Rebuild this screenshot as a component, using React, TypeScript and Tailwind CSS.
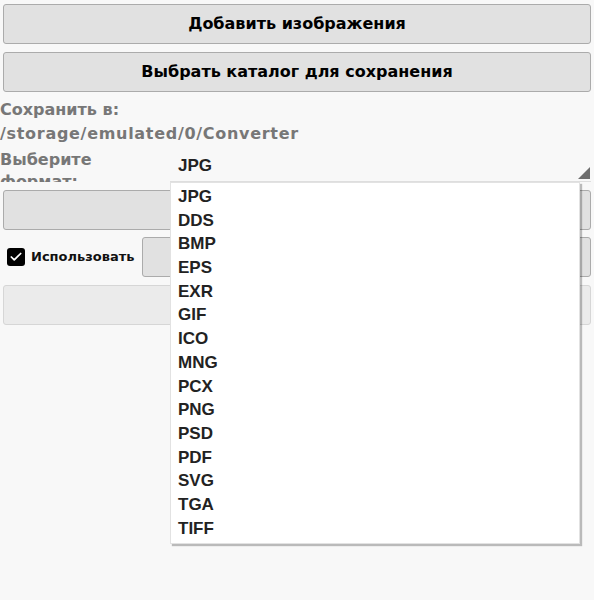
import { Check } from 'lucide-react';

const FORMATS = ['JPG', 'DDS', 'BMP', 'EPS', 'EXR', 'GIF', 'ICO', 'MNG', 'PCX', 'PNG', 'PSD', 'PDF', 'SVG', 'TGA', 'TIFF'];

function Button({ children, disabled, className = '' }: { children?: React.ReactNode; disabled?: boolean; className?: string }) {
  return (
    <button
      className={`h-[40px] rounded-[3px] border text-[16px] font-bold text-black ${
        disabled ? 'border-[#d6d6d6] bg-[#ebebeb]' : 'border-[#ababab] bg-[#e1e1e1]'
      } ${className}`}
    >
      {children}
    </button>
  );
}

export default function App() {
  return (
    <div className="relative h-[600px] w-full overflow-hidden bg-[#f8f8f8] px-[3px] pt-[4px] font-['DejaVu_Sans',Verdana,sans-serif]">
      <div className="flex flex-col">
        <Button className="w-full">Добавить изображения</Button>
        <Button className="mt-[8px] w-full">Выбрать каталог для сохранения</Button>

        <div className="-ml-[3px] mt-[6px] text-[16px] font-bold leading-[24px] text-[#777]">
          <div>Сохранить в:</div>
          <div className="tracking-[0.7px]">/storage/emulated/0/Converter</div>
        </div>

        <div className="-ml-[3px] mt-[3px] flex h-[33px] overflow-hidden">
          <div className="w-[170px] shrink-0 text-[16px] font-bold leading-[22px] text-[#777]">
            <div className="w-[110px]">Выберите формат:</div>
          </div>
          <div className="relative flex-1 border-b border-[#dedede]">
            <div className="pl-[8px] pt-[5px] font-['Liberation_Sans',Arial,sans-serif] text-[17px] font-bold leading-[24px] text-[#222]">JPG</div>
            <svg className="absolute bottom-[2px] right-[1px]" width="12" height="12" viewBox="0 0 12 12">
              <polygon points="12,0 12,12 0,12" fill="#6e6e6e" />
            </svg>
          </div>
        </div>

        <Button className="mt-[8px] w-full" />

        <div className="mt-[7px] flex items-center">
          <div className="flex w-[139px] shrink-0 items-center gap-[6px] pl-[4px]">
            <span className="flex h-[18px] w-[18px] items-center justify-center rounded-[3px] bg-black">
              <Check size={14} strokeWidth={3} color="white" />
            </span>
            <span className="text-[13px] font-bold text-[#111]">Использовать</span>
          </div>
          <Button className="flex-1" />
        </div>

        <Button disabled className="mt-[8px] w-full" />
      </div>

      <div className="absolute left-[170px] top-[182px] w-[410px] border border-[#e2e2e2] bg-white pb-[3px] pt-[2px] font-['Liberation_Sans',Arial,sans-serif] shadow-[2px_2px_1px_rgba(0,0,0,0.25)]">
        {FORMATS.map((f) => (
          <div key={f} className="h-[23.7px] pl-[7px] text-[17px] font-bold leading-[23.7px] text-[#222]">
            {f}
          </div>
        ))}
      </div>
    </div>
  );
}
